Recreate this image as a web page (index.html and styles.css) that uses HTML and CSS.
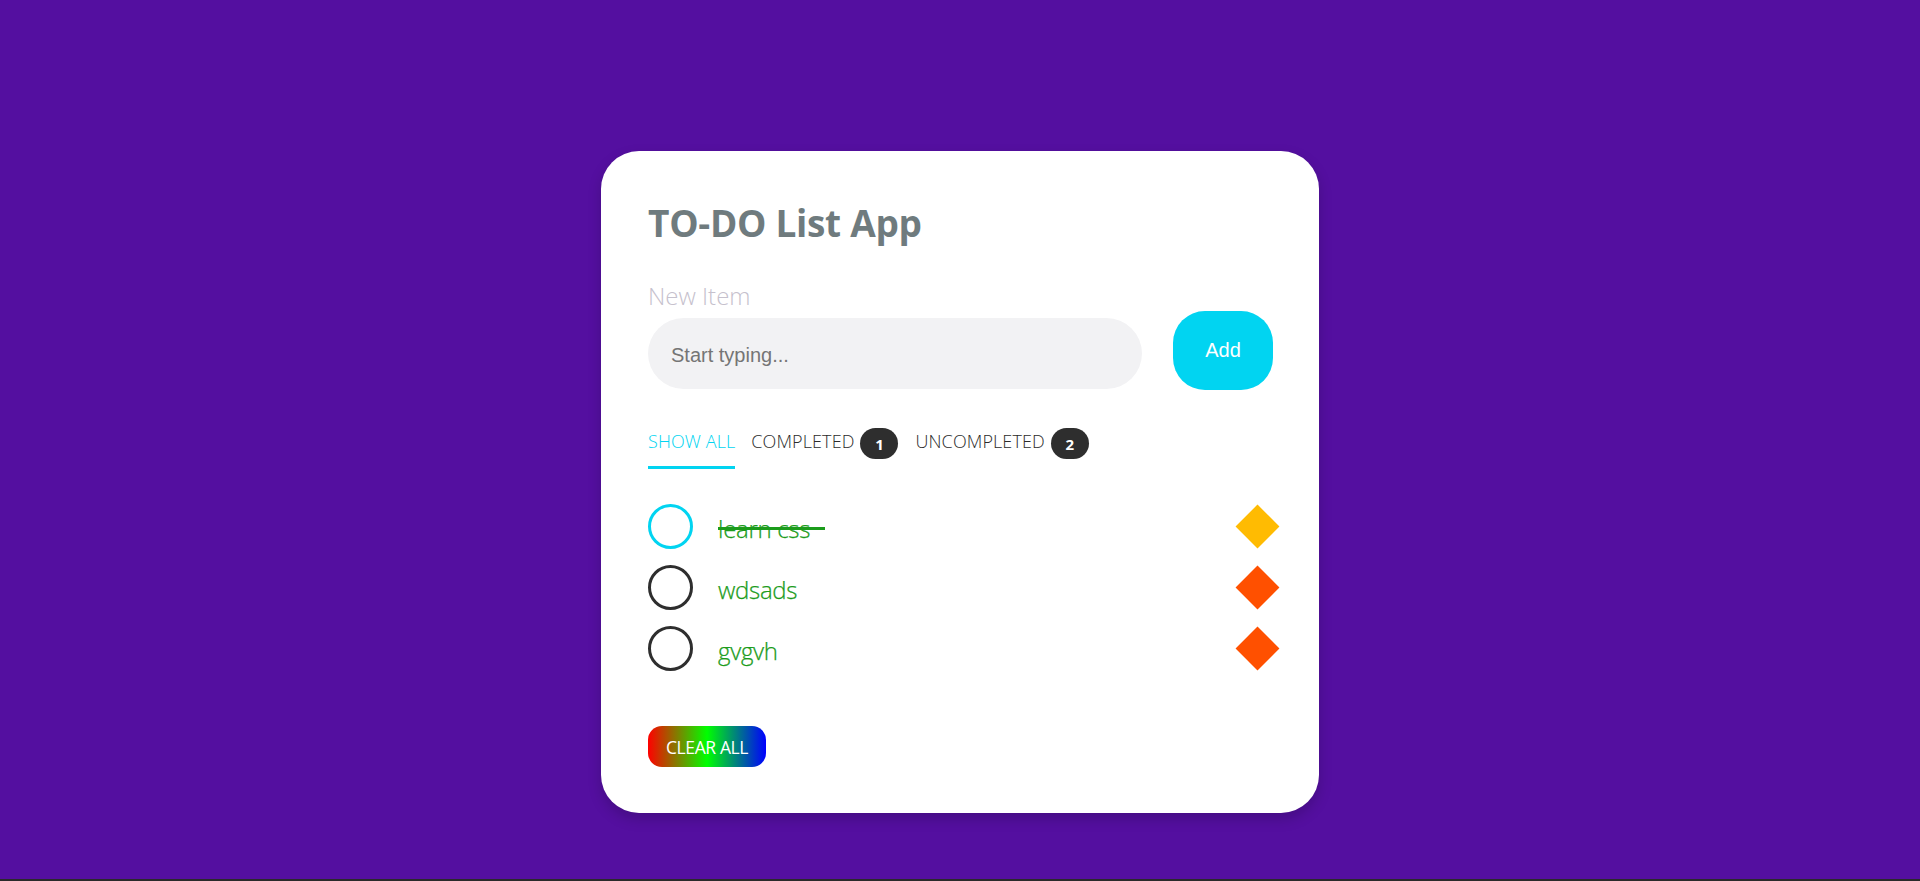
FILE: index.html
```html
<!DOCTYPE html>
<html lang="en">
<head>
<meta charset="utf-8">
<title>TO-DO List App</title>
<link rel="stylesheet" href="styles.css">
</head>
<body>
<div class="page">
  <main class="card">
    <h1 class="title">TO-DO List App</h1>
    <label class="label" for="new-item">New Item</label>
    <div class="form-row">
      <input class="input" id="new-item" type="text" placeholder="Start typing...">
      <button class="add-btn" type="button">Add</button>
    </div>
    <nav class="tabs">
      <a class="tab active"><span class="tab-label">SHOW ALL</span></a>
      <a class="tab"><span class="tab-label">COMPLETED</span><span class="badge">1</span></a>
      <a class="tab"><span class="tab-label">UNCOMPLETED</span><span class="badge">2</span></a>
    </nav>
    <ul class="list">
      <li class="item">
        <span class="check done"></span>
        <span class="item-text struck">learn css</span>
        <span class="prio"><span class="diamond yellow"></span></span>
      </li>
      <li class="item">
        <span class="check"></span>
        <span class="item-text">wdsads</span>
        <span class="prio"><span class="diamond red"></span></span>
      </li>
      <li class="item">
        <span class="check"></span>
        <span class="item-text">gvgvh</span>
        <span class="prio"><span class="diamond red"></span></span>
      </li>
    </ul>
    <button class="clear-btn" type="button">CLEAR ALL</button>
  </main>
</div>
<footer class="bottom-bar"></footer>
</body>
</html>
```

FILE: styles.css
```css
* {
  box-sizing: border-box;
}

html, body {
  margin: 0;
  padding: 0;
}

body {
  background: #540fa0;
  height: 881px;
  display: flex;
  flex-direction: column;
  font-family: "Open Sans", "Noto Sans", sans-serif;
  overflow: hidden;
}

.page {
  flex: 1;
  display: flex;
  justify-content: center;
  align-items: flex-start;
  padding-top: 151px;
}

.card {
  width: 718px;
  background: #ffffff;
  border-radius: 38px;
  padding: 50px 40px 46px 47px;
  box-shadow: 0 6px 14px rgba(0, 0, 0, 0.18);
}

.title {
  margin: 0;
  font-size: 37px;
  line-height: 44px;
  font-weight: 700;
  color: #6f7b7e;
  letter-spacing: -0.3px;
}

.label {
  display: block;
  margin-top: 36px;
  font-size: 24px;
  line-height: 30px;
  font-weight: 300;
  color: #c6c1cd;
}

.form-row {
  display: flex;
  align-items: flex-start;
  gap: 31px;
  padding-right: 6px;
}

.input {
  margin-top: 7px;
  width: 494px;
  height: 71px;
  border: none;
  outline: none;
  border-radius: 36px;
  background: #f2f2f4;
  padding: 4px 23px 0;
  font-family: "Liberation Sans", Arial, sans-serif;
  font-size: 20px;
  color: #333;
}

.input::placeholder {
  color: #757575;
}

.add-btn {
  width: 100px;
  height: 79px;
  border: none;
  border-radius: 32px;
  background: #01d4f1;
  color: #ffffff;
  font-family: "Liberation Sans", Arial, sans-serif;
  font-size: 20px;
  padding: 0;
}

.tabs {
  display: flex;
  margin-top: 38px;
  gap: 16px;
}

.tab {
  display: flex;
  align-items: center;
  gap: 6px;
  height: 41px;
  padding-bottom: 7px;
  border-bottom: 3px solid transparent;
  font-size: 18px;
  font-weight: 300;
  color: #2b2b2b;
  letter-spacing: 0.1px;
  cursor: pointer;
}

.tab-label {
  padding-bottom: 5px;
}

.tab.active {
  color: #01d4f1;
  border-bottom-color: #01d4f1;
}

.tab + .tab + .tab {
  margin-left: 1px;
}

.badge {
  display: inline-flex;
  align-items: center;
  justify-content: center;
  width: 38px;
  height: 31px;
  border-radius: 16px;
  background: #2e2e2e;
  color: #ffffff;
  font-size: 15px;
  font-weight: 700;
  letter-spacing: 0;
}

.list {
  list-style: none;
  margin: 21px 0 0;
  padding: 6px 0 0;
}

.item {
  display: flex;
  align-items: center;
  height: 61px;
}

.check {
  flex: none;
  width: 45px;
  height: 45px;
  border: 3.5px solid #2e2e2e;
  border-radius: 50%;
}

.check.done {
  border-color: #01d4f1;
}

.item-text {
  position: relative;
  margin-left: 25px;
  margin-top: 4px;
  flex: 1;
  font-size: 24px;
  font-weight: 300;
  color: #1b9c1b;
  line-height: 32px;
  letter-spacing: -0.3px;
  -webkit-text-stroke: 0.25px #1b9c1b;
}

.item-text.struck::after {
  content: "";
  position: absolute;
  left: 0;
  top: 14px;
  width: 107px;
  height: 3px;
  background: #1b9c1b;
}

.prio {
  flex: none;
  width: 44px;
  height: 44px;
  display: flex;
  align-items: center;
  justify-content: center;
}

.diamond {
  width: 31px;
  height: 31px;
  transform: rotate(45deg);
}

.diamond.yellow {
  background: #ffbb02;
}

.diamond.red {
  background: #ff5000;
}

.clear-btn {
  margin-top: 47px;
  height: 41px;
  width: 118px;
  border: none;
  border-radius: 14px;
  background: linear-gradient(90deg, #ff0000, #00ff00, #0000ff);
  color: #ffffff;
  font-family: "Open Sans", "Noto Sans", sans-serif;
  font-size: 17.5px;
  font-weight: 400;
  letter-spacing: -0.4px;
  padding: 0;
}

.bottom-bar {
  height: 2px;
  background: #2a2a2a;
}
```
